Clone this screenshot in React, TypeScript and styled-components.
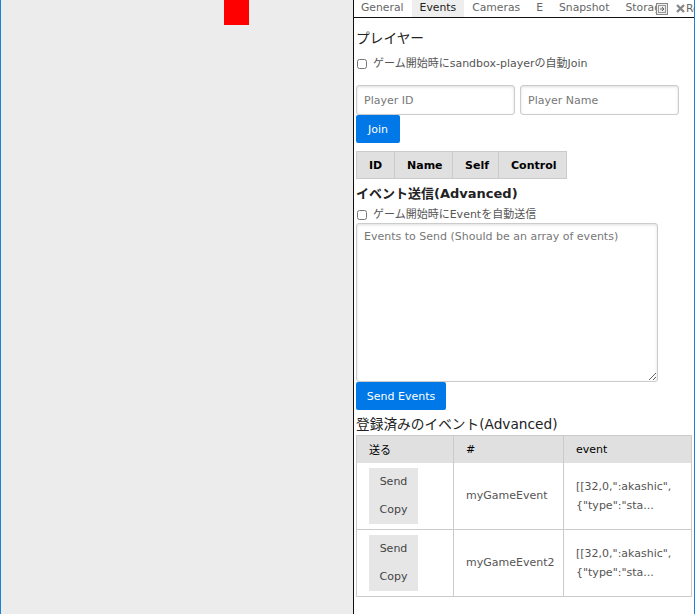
import React from "react";
import styled, { createGlobalStyle } from "styled-components";

const FONT = `"DejaVu Sans", "Noto Sans CJK JP", sans-serif`;

const Global = createGlobalStyle`
  html, body { margin: 0; padding: 0; background: #ececec; }
  * { box-sizing: border-box; }
  body { font-family: ${FONT}; font-size: 11px; }
`;

const Frame = styled.div`
  display: flex;
  height: 614px;
  width: 695px;
  border-left: 1px solid #1683d8;
  border-right: 1px solid #1683d8;
  overflow: hidden;
`;

const Stage = styled.div`
  width: 353px;
  flex: none;
  background: #ececec;
  border-right: 1px solid #111;
  padding-left: 223px;
`;

const RedBox = styled.div`
  width: 25px;
  height: 25px;
  background: #ff0000;
`;

const Devtools = styled.div`
  flex: 1;
  background: #fff;
  display: flex;
  flex-direction: column;
  min-width: 0;
`;

const TabBar = styled.div`
  position: relative;
  display: flex;
  height: 18px;
  border-bottom: 1px solid #111;
  white-space: nowrap;
  overflow: hidden;
`;

const Tab = styled.div<{ $active?: boolean }>`
  padding: 0 8px;
  height: 17px;
  line-height: 16px;
  font-size: 10.8px;
  color: ${(p) => (p.$active ? "#222" : "#666")};
  background: ${(p) => (p.$active ? "#eeeeee" : "transparent")};
  flex: none;
  &:first-child { padding-left: 7px; }
`;

const TabIcons = styled.div`
  position: absolute;
  left: 302px;
  top: 0;
  height: 17px;
  display: flex;
  align-items: center;
  color: #666;
  font-size: 10.8px;
`;

const IconSlot = styled.span<{ $gap: number }>`
  display: inline-flex;
  margin-right: ${(p) => p.$gap}px;
`;

const Content = styled.div`
  padding: 0 4px 0 2px;
  color: #333;
`;

const Heading = styled.div<{ $top: number; $bold?: boolean }>`
  font-size: ${(p) => (p.$bold ? "13px" : "13.7px")};
  font-weight: ${(p) => (p.$bold ? "bold" : "normal")};
  color: #222;
  margin-top: ${(p) => p.$top}px;
  line-height: 18px;
`;

const CheckRow = styled.label<{ $top: number }>`
  display: flex;
  align-items: center;
  gap: 4px;
  margin-top: ${(p) => p.$top}px;
  color: #555;
  font-size: 11px;
  line-height: 16px;
`;

const Check = styled.input`
  width: 10px;
  height: 10px;
  margin: 0 2px 0 1px;
`;

const InputRow = styled.div`
  display: flex;
  gap: 5px;
  margin-top: 13px;
`;

const TextInput = styled.input`
  width: 159px;
  height: 30px;
  padding: 0 7px;
  font-family: ${FONT};
  font-size: 11px;
  border: 1px solid #ccc;
  border-radius: 3px;
  box-shadow: inset 0 1px 3px #ddd;
  &::placeholder { color: #777; }
`;

const PrimaryButton = styled.button<{ $w: number }>`
  display: block;
  width: ${(p) => p.$w}px;
  height: 28px;
  border: none;
  border-radius: 2px;
  background: #0078e7;
  color: #fff;
  font-family: ${FONT};
  font-size: 11px;
  padding: 0;
`;

const Table = styled.table<{ $top: number; $w: number }>`
  border-collapse: collapse;
  border: 1px solid #cbcbcb;
  margin-top: ${(p) => p.$top}px;
  width: ${(p) => p.$w}px;
  table-layout: fixed;
  font-size: 11px;
`;

const Th = styled.th<{ $bold?: boolean; $center?: boolean }>`
  background: #e0e0e0;
  color: #000;
  font-weight: ${(p) => (p.$bold ? "bold" : "normal")};
  text-align: ${(p) => (p.$center ? "center" : "left")};
  border-left: 1px solid #cbcbcb;
  height: 27px;
  padding: 0 12px;
  white-space: nowrap;
`;

const Td = styled.td`
  border-left: 1px solid #cbcbcb;
  border-bottom: 1px solid #cbcbcb;
  padding: 5px 12px;
  color: #555;
  vertical-align: middle;
  height: 66px;
  line-height: 19px;
  white-space: nowrap;
  overflow: hidden;
`;

const TextArea = styled.textarea`
  display: block;
  width: 302px;
  height: 159px;
  margin-top: 0;
  padding: 6px 7px;
  font-family: ${FONT};
  font-size: 11px;
  border: 1px solid #ccc;
  border-radius: 3px;
  box-shadow: inset 0 1px 3px #ddd;
  &::placeholder { color: #777; }
`;

const ButtonStack = styled.div`
  display: flex;
  flex-direction: column;
  width: 49px;
`;

const GrayButton = styled.button`
  height: 28px;
  border: none;
  background: #e6e6e6;
  color: #444;
  font-family: ${FONT};
  font-size: 11px;
  padding: 0;
`;

const PanelIcon = () => (
  <svg width="12" height="12" viewBox="0 0 12 12">
    <rect x="0.5" y="0.5" width="11" height="11" fill="#eee" stroke="#888" />
    <rect x="2.5" y="2.5" width="7" height="7" fill="none" stroke="#999" />
    <path d="M4 6 L8 6 M6 4 L8 6 L6 8" stroke="#666" fill="none" />
  </svg>
);

const CloseIcon = () => (
  <svg width="9" height="9" viewBox="0 0 9 9">
    <path d="M1 1 L8 8 M8 1 L1 8" stroke="#888" strokeWidth="2.4" />
  </svg>
);

const events = [{ name: "myGameEvent" }, { name: "myGameEvent2" }];

export default function App() {
  return (
    <>
      <Global />
      <Frame>
        <Stage>
          <RedBox />
        </Stage>
        <Devtools>
          <TabBar>
            <Tab>General</Tab>
            <Tab $active>Events</Tab>
            <Tab>Cameras</Tab>
            <Tab>E</Tab>
            <Tab>Snapshot</Tab>
            <Tab>Storage</Tab>
            <TabIcons>
              <IconSlot $gap={8}>
                <PanelIcon />
              </IconSlot>
              <IconSlot $gap={1}>
                <CloseIcon />
              </IconSlot>
              <span>Re</span>
            </TabIcons>
          </TabBar>
          <Content>
            <Heading $top={11}>プレイヤー</Heading>
            <CheckRow $top={9}>
              <Check type="checkbox" />
              ゲーム開始時にsandbox-playerの自動Join
            </CheckRow>
            <InputRow>
              <TextInput placeholder="Player ID" />
              <TextInput placeholder="Player Name" />
            </InputRow>
            <PrimaryButton $w={44}>Join</PrimaryButton>
            <Table $top={8} $w={210}>
              <colgroup>
                <col style={{ width: 38 }} />
                <col style={{ width: 58 }} />
                <col style={{ width: 46 }} />
                <col style={{ width: 68 }} />
              </colgroup>
              <thead>
                <tr>
                  <Th $bold $center>ID</Th>
                  <Th $bold $center>Name</Th>
                  <Th $bold $center>Self</Th>
                  <Th $bold $center>Control</Th>
                </tr>
              </thead>
            </Table>
            <Heading $top={6} $bold>イベント送信(Advanced)</Heading>
            <CheckRow $top={4}>
              <Check type="checkbox" />
              ゲーム開始時にEventを自動送信
            </CheckRow>
            <TextArea placeholder="Events to Send (Should be an array of events)" />
            <PrimaryButton $w={90}>Send Events</PrimaryButton>
            <Heading $top={5}>登録済みのイベント(Advanced)</Heading>
            <Table $top={2} $w={335}>
              <colgroup>
                <col style={{ width: 97 }} />
                <col style={{ width: 110 }} />
                <col style={{ width: 128 }} />
              </colgroup>
              <thead>
                <tr>
                  <Th>送る</Th>
                  <Th>#</Th>
                  <Th>event</Th>
                </tr>
              </thead>
              <tbody>
                {events.map((e) => (
                  <tr key={e.name}>
                    <Td>
                      <ButtonStack>
                        <GrayButton>Send</GrayButton>
                        <GrayButton>Copy</GrayButton>
                      </ButtonStack>
                    </Td>
                    <Td>{e.name}</Td>
                    <Td>
                      [[32,0,":akashic",
                      <br />
                      {'{"type":"sta...'}
                    </Td>
                  </tr>
                ))}
              </tbody>
            </Table>
          </Content>
        </Devtools>
      </Frame>
    </>
  );
}
